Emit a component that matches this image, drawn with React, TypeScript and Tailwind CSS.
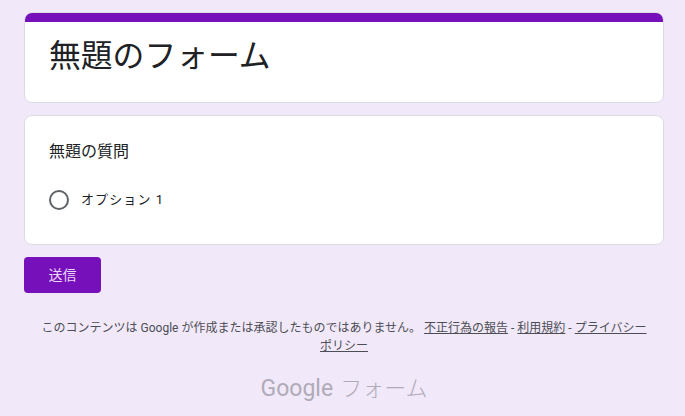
export default function App() {
  return (
    <div
      className="h-[416px] overflow-hidden bg-[#f1e9f9] px-6 pt-3 text-[#202124]"
      style={{ fontFamily: 'Roboto, "Noto Sans CJK JP", sans-serif' }}
    >
      <div className="h-[91px] w-[640px] overflow-hidden rounded-lg border border-[#dadce0] bg-white">
        <div className="-mx-px -mt-px h-[10px] bg-[#7610ba]"></div>
        <h1 className="pl-[24px] pt-[12px] text-[31.8px] leading-[44px] font-normal">無題のフォーム</h1>
      </div>

      <div className="mt-3 h-[130px] w-[640px] rounded-lg border border-[#dadce0] bg-white pl-6 pt-[25px]">
        <p className="text-base leading-[22px]">無題の質問</p>
        <div className="mt-[27px] flex items-center gap-3">
          <div className="h-5 w-5 rounded-full border-2 border-[#5f6368]"></div>
          <span className="text-[13px] leading-5 tracking-[1.1px]">オプション 1</span>
        </div>
      </div>

      <button className="mt-3 block h-9 w-[77px] rounded bg-[#7610ba] text-sm text-[#ecd8f8]">送信</button>

      <p className="mt-[26px] w-[640px] px-[15px] text-center text-xs leading-[18px] text-[#4d4d55]">
        このコンテンツは Google が作成または承認したものではありません。
        <a className="ml-[3px] underline">不正行為の報告</a> - <a className="underline">利用規約</a> -{' '}
        <a className="underline">プライバシー ポリシー</a>
      </p>

      <div className="mt-[18px] flex w-[640px] items-center justify-center gap-[7px] text-[#b0abb8]">
        <span className="text-[23px] leading-8 font-normal">Google</span>
        <span className="text-[22px] leading-8 font-light">フォーム</span>
      </div>
    </div>
  );
}
